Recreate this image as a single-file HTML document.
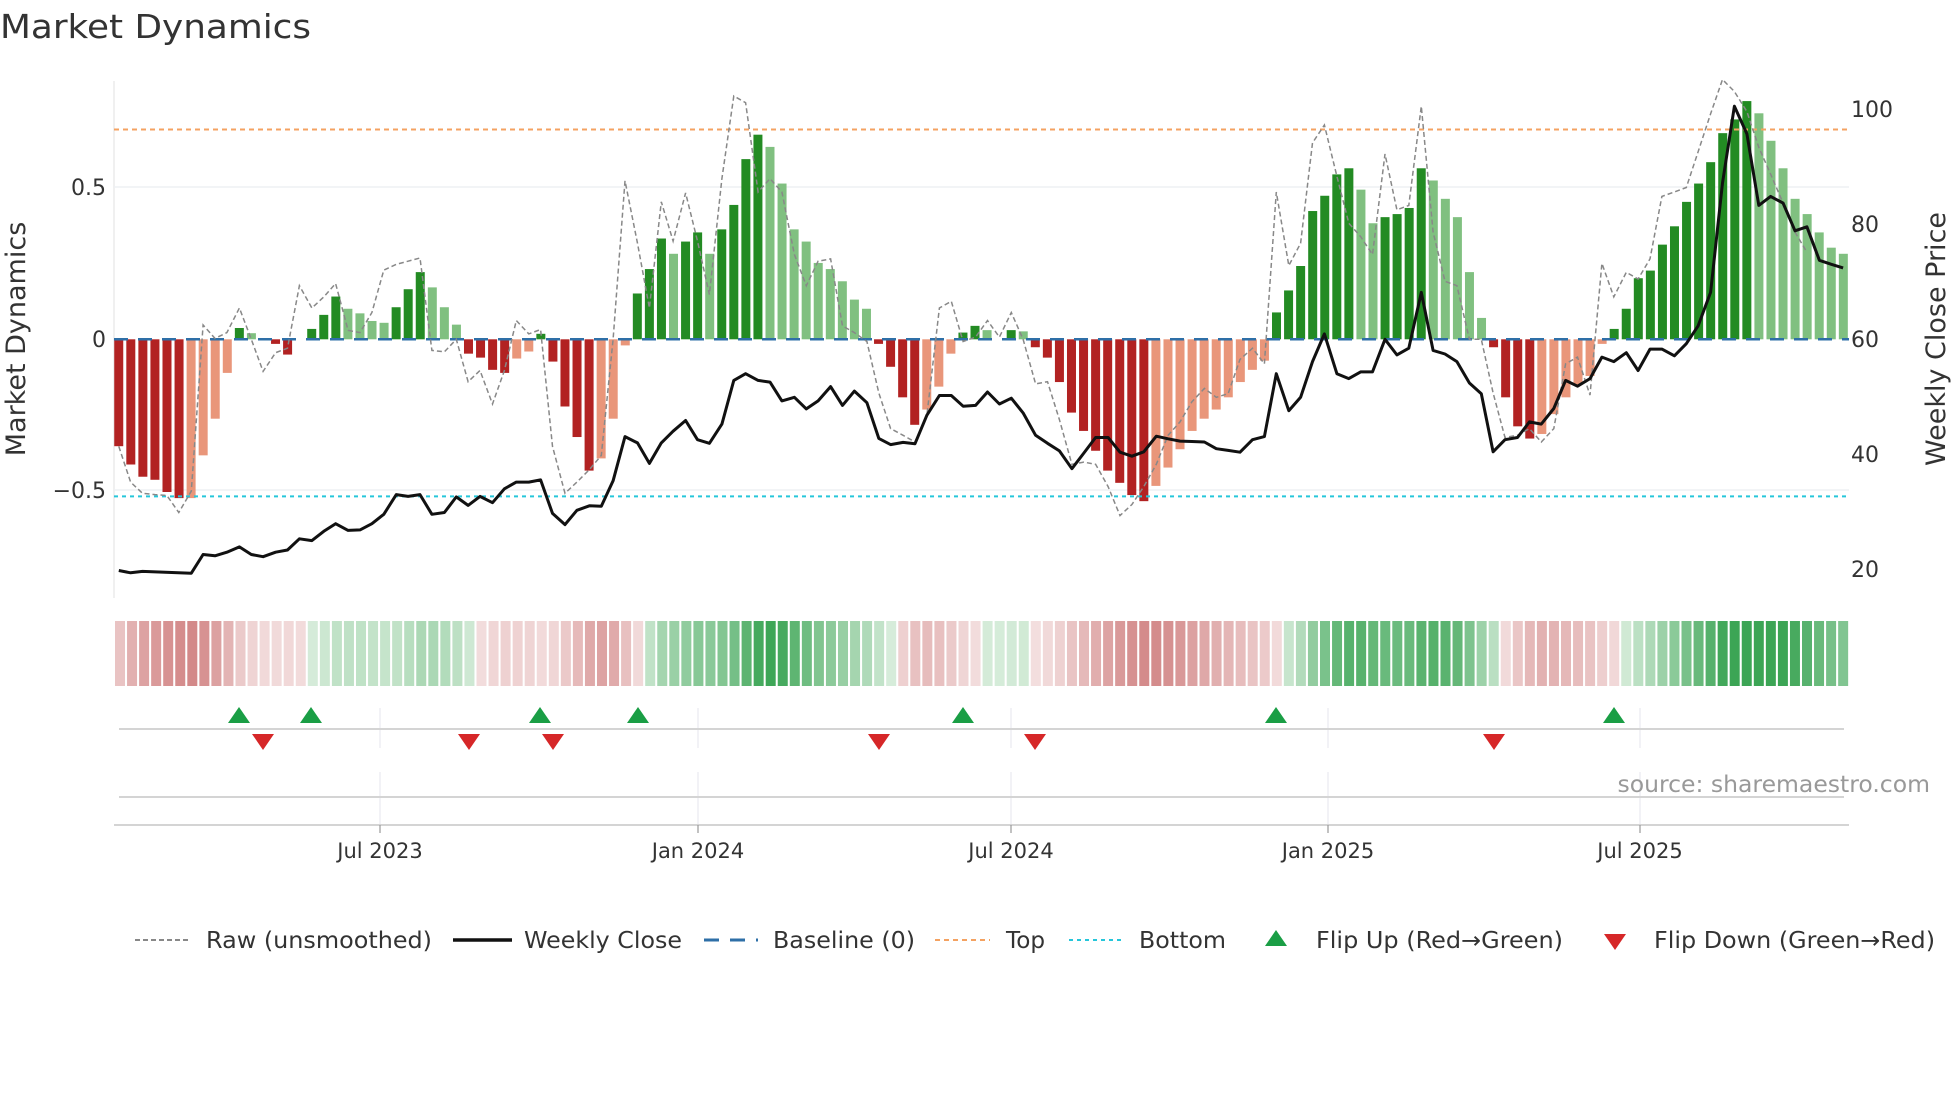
<!DOCTYPE html>
<html><head><meta charset="utf-8"><style>
html,body{margin:0;padding:0;background:#fff;width:1960px;height:1102px;overflow:hidden}
svg{display:block}
text{font-family:"DejaVu Sans","Liberation Sans",sans-serif;fill:#333}
</style></head><body>
<svg id="s" width="1960" height="1102" viewBox="0 0 1960 1102" xmlns="http://www.w3.org/2000/svg">
<text x="0" y="38" font-size="33" textLength="311" lengthAdjust="spacingAndGlyphs">Market Dynamics</text>
<line x1="114" y1="81" x2="114" y2="598" stroke="#e6e6e6" stroke-width="1.2"/>
<line x1="114" y1="187" x2="1849" y2="187" stroke="#eef0f4" stroke-width="1.5"/>
<line x1="114" y1="490" x2="1849" y2="490" stroke="#eef0f4" stroke-width="1.5"/>
<g id="bars"></g>
<line x1="114" y1="129.5" x2="1849" y2="129.5" stroke="#f4a261" stroke-width="2" stroke-dasharray="5,4"/>
<line x1="114" y1="496.4" x2="1849" y2="496.4" stroke="#26c6da" stroke-width="2" stroke-dasharray="4,4"/>
<line x1="114" y1="339.3" x2="1849" y2="339.3" stroke="#2e6fa7" stroke-width="2.5" stroke-dasharray="14,10"/>
<polyline id="raw" fill="none" stroke="#888" stroke-width="1.5" stroke-dasharray="5,3"/>
<polyline id="close" fill="none" stroke="#111" stroke-width="3" stroke-linejoin="round"/>
<text x="106" y="195" font-size="22" text-anchor="end">0.5</text>
<text x="106" y="347" font-size="22" text-anchor="end">0</text>
<text x="106" y="498" font-size="22" text-anchor="end">−0.5</text>
<text font-size="27" text-anchor="middle" transform="translate(25,339) rotate(-90)">Market Dynamics</text>
<text x="1851" y="117" font-size="22">100</text>
<text x="1851" y="232" font-size="22">80</text>
<text x="1851" y="347" font-size="22">60</text>
<text x="1851" y="462" font-size="22">40</text>
<text x="1851" y="577" font-size="22">20</text>
<text font-size="27" text-anchor="middle" transform="translate(1945,339) rotate(-90)">Weekly Close Price</text>
<g id="strip"></g>
<g stroke="#e8eaef" stroke-width="1.2">
<line x1="380" y1="708" x2="380" y2="748"/><line x1="698" y1="708" x2="698" y2="748"/><line x1="1011" y1="708" x2="1011" y2="748"/><line x1="1328" y1="708" x2="1328" y2="748"/><line x1="1640" y1="708" x2="1640" y2="748"/>
<line x1="380" y1="772" x2="380" y2="825"/><line x1="698" y1="772" x2="698" y2="825"/><line x1="1011" y1="772" x2="1011" y2="825"/><line x1="1328" y1="772" x2="1328" y2="825"/><line x1="1640" y1="772" x2="1640" y2="825"/>
</g>
<line x1="119" y1="729" x2="1844" y2="729" stroke="#d4d4d4" stroke-width="2"/>
<line x1="119" y1="797" x2="1844" y2="797" stroke="#d4d4d4" stroke-width="2"/>
<line x1="114" y1="825" x2="1849" y2="825" stroke="#d4d4d4" stroke-width="2"/>
<g stroke="#999" stroke-width="1.2">
<line x1="380" y1="825" x2="380" y2="833"/><line x1="698" y1="825" x2="698" y2="833"/><line x1="1011" y1="825" x2="1011" y2="833"/><line x1="1328" y1="825" x2="1328" y2="833"/><line x1="1640" y1="825" x2="1640" y2="833"/>
</g>
<g id="marks"></g>
<g font-size="21" text-anchor="middle">
<text x="380" y="858">Jul 2023</text><text x="698" y="858">Jan 2024</text><text x="1011" y="858">Jul 2024</text><text x="1328" y="858">Jan 2025</text><text x="1640" y="858">Jul 2025</text>
</g>
<text x="1930" y="792" font-size="23.5" text-anchor="end" style="fill:#999">source: sharemaestro.com</text>
<line x1="135" y1="940" x2="190" y2="940" stroke="#888" stroke-width="2" stroke-dasharray="5,3"/>
<text x="206" y="948" font-size="23" textLength="226" lengthAdjust="spacingAndGlyphs">Raw (unsmoothed)</text>
<line x1="453" y1="940" x2="512" y2="940" stroke="#111" stroke-width="3.5"/>
<text x="524" y="948" font-size="23" textLength="158" lengthAdjust="spacingAndGlyphs">Weekly Close</text>
<line x1="704" y1="940" x2="758" y2="940" stroke="#2e6fa7" stroke-width="3" stroke-dasharray="15,11"/>
<text x="773" y="948" font-size="23" textLength="142" lengthAdjust="spacingAndGlyphs">Baseline (0)</text>
<line x1="935" y1="940" x2="990" y2="940" stroke="#f4a261" stroke-width="2" stroke-dasharray="5,4"/>
<text x="1006" y="948" font-size="23" textLength="39" lengthAdjust="spacingAndGlyphs">Top</text>
<line x1="1069" y1="940" x2="1123" y2="940" stroke="#26c6da" stroke-width="2" stroke-dasharray="4,4"/>
<text x="1139" y="948" font-size="23" textLength="87" lengthAdjust="spacingAndGlyphs">Bottom</text>
<polygon points="1265,946 1287,946 1276,930" fill="#1a9e45"/>
<text x="1316" y="948" font-size="23" textLength="247" lengthAdjust="spacingAndGlyphs">Flip Up (Red→Green)</text>
<polygon points="1604,934 1626,934 1615,950" fill="#d62728"/>
<text x="1654" y="948" font-size="23" textLength="281" lengthAdjust="spacingAndGlyphs">Flip Down (Green→Red)</text>
</svg>
<script>
var NS="http://www.w3.org/2000/svg";
function el(p,t,a){var e=document.createElementNS(NS,t);for(var k in a)e.setAttribute(k,a[k]);p.appendChild(e);return e;}
var v=[-.35,-.41,-.45,-.46,-.50,-.52,-.52,-.38,-.26,-.11,.037,.02,0,-.015,-.05,0,.034,.08,.14,.10,.085,.06,.054,.105,.164,.22,.17,.105,.048,-.047,-.06,-.10,-.11,-.063,-.04,.018,-.073,-.22,-.32,-.43,-.39,-.26,-.02,.15,.23,.33,.28,.32,.35,.28,.36,.44,.59,.67,.63,.51,.36,.32,.25,.23,.19,.13,.10,-.015,-.09,-.19,-.28,-.23,-.155,-.047,.022,.044,
.03,0,.03,.026,-.026,-.06,-.14,-.24,-.30,-.365,-.43,-.47,-.51,-.53,-.48,-.42,-.36,-.30,-.26,-.23,-.19,-.14,-.10,-.07,.088,.16,.24,.42,.47,.54,.56,.49,.38,.40,.41,.43,.56,.52,.46,.40,.22,.07,-.026,-.19,-.285,-.325,-.31,-.245,-.19,-.15,-.12,-.015,.034,.10,.20,.225,.31,.37,.45,.51,.58,.675,.72,.78,.74,.65,.56,.46,.41,.35,.30,.28];
var t="DDDDDDLLLLDLDDDDDDDLLLLDDDLLLDDDDLLDDDDDLLLDDDLDDLDDDDLLLLLLLLLDDDDLLLDD"+"LDDLDDDDDDDDDDLLLLLLLLLLDDDDDDDLLDDDDLLLLLDDDDLLLLLLDDDDDDDDDDDDLLLLLLLL";
var bars=document.getElementById("bars"),strip=document.getElementById("strip");
var Z=339.3,S=305.4,X0=118.75,DX=12.06,W=9;
var ema=0;
for(var i=0;i<v.length;i++){
 var x=X0+i*DX,val=v[i];
 if(val!==0){var h=Math.abs(val)*S;var y=val>0?Z-h:Z;
  var c=val>0?(t[i]=="D"?"#238b23":"#80c080"):(t[i]=="D"?"#b22222":"#e9967a");
  el(bars,"rect",{x:x-W/2,y:y,width:W,height:h,fill:c});}
 ema=0.55*ema+0.45*val;
 var a=Math.min(1,Math.abs(ema)/0.6);
 var col;
 if(ema<0){col="rgb("+Math.round(243-(243-205)*a)+","+Math.round(222-(222-120)*a)+","+Math.round(222-(222-120)*a)+")";}
 else{col="rgb("+Math.round(214-(214-60)*a)+","+Math.round(236-(236-165)*a)+","+Math.round(218-(218-85)*a)+")";}
 el(strip,"rect",{x:(114+i*12.05+1).toFixed(2),y:621,width:10,height:65,fill:col});
}
function pts(a,b){var s=[];for(var i=0;i<a.length;i+=2)s.push((a[i]/1.6).toFixed(1)+","+(a[i+1]/2.24).toFixed(1));for(var i=0;i<b.length;i+=2)s.push(((b[i]+1568)/1.6).toFixed(1)+","+(b[i+1]/2.24).toFixed(1));return s.join(" ");}
var c1=[190,1278,209,1283,228,1280,306,1284,325,1242,344,1245,363,1237,383,1225,402,1242,421,1247,441,1237,460,1232,479,1207,499,1211,518,1190,537,1173,557,1188,576,1187,595,1173,614,1152,634,1108,653,1112,672,1108,691,1152,711,1148,730,1113,749,1132,768,1112,788,1126,807,1095,826,1080,846,1080,865,1075,884,1150,904,1175,923,1143,943,1133,962,1134,981,1077,1000,978,1020,992,1039,1038,1058,992,1077,966,1097,942,1116,985,1135,993,1155,950,1174,852,1193,837,1213,852,1232,856,1251,898,1271,890,1290,916,1309,898,1329,866,1348,908,1367,876,1387,902,1406,982,1425,996,1445,991,1464,994,1483,930,1503,886,1522,886,1541,910,1561,908];
var c2=[12,878,31,905,50,892,69,925,89,975,108,993,127,1010,147,1050,166,1015,185,980,205,980,224,1013,243,1022,262,1012,282,977,301,983,320,988,339,989,359,990,378,1005,397,1009,416,1013,436,985,455,978,474,837,494,920,513,890,532,810,551,748,571,837,590,848,609,833,628,833,648,760,667,795,686,780,706,655,725,785,744,793,763,810,783,858,802,882,821,1012,840,985,860,980,879,945,898,950,918,915,937,852,956,865,976,848,995,800,1014,810,1034,790,1053,830,1072,782,1091,782,1111,797,1130,770,1149,730,1169,655,1188,410,1207,238,1227,300,1246,460,1265,440,1285,455,1304,517,1323,508,1343,583,1362,592,1381,600];
var r1=[190,1000,209,1080,228,1105,248,1108,267,1110,286,1148,306,1100,325,728,344,758,363,745,383,690,402,760,421,832,441,790,460,780,479,640,499,690,518,665,537,635,557,740,576,745,595,700,614,605,634,592,653,585,672,578,691,785,711,788,730,760,749,855,768,830,788,905,807,830,826,718,846,748,865,738,884,1000,904,1105,923,1080,943,1052,962,1020,981,760,1000,405,1020,545,1039,690,1058,452,1077,540,1097,432,1116,540,1135,660,1155,400,1174,215,1193,230,1213,430,1232,400,1251,430,1271,570,1290,640,1309,585,1329,580,1348,730,1367,745,1387,765,1406,880,1425,960,1445,975,1464,990,1483,930,1503,690,1522,675,1541,765,1561,755];
var r2=[12,718,31,755,50,700,69,760,89,860,108,855,127,940,147,1040,166,1035,185,1040,205,1090,224,1155,243,1130,262,1090,282,1040,301,975,320,945,339,900,359,870,378,890,397,882,416,805,436,780,455,815,474,430,494,595,513,545,532,320,551,280,571,395,590,500,609,530,628,570,648,345,667,470,686,460,706,238,725,520,744,630,763,640,783,760,802,760,821,880,840,980,860,975,879,960,898,990,918,960,937,815,956,800,976,885,995,590,1014,665,1034,610,1053,625,1072,580,1091,440,1111,430,1130,420,1149,340,1169,255,1188,178,1207,205,1227,250,1246,330,1265,390,1285,455,1304,520,1323,565];
document.getElementById("close").setAttribute("points",pts(c1,c2));
document.getElementById("raw").setAttribute("points",pts(r1,r2));
var m=document.getElementById("marks");
[239,311,540,638,963,1276,1614].forEach(function(x){el(m,"polygon",{points:(x-11)+",723 "+(x+11)+",723 "+x+",707",fill:"#1a9e45"});});
[263,469,553,879,1035,1494].forEach(function(x){el(m,"polygon",{points:(x-11)+",734 "+(x+11)+",734 "+x+",750",fill:"#d62728"});});
</script>
</body></html>
